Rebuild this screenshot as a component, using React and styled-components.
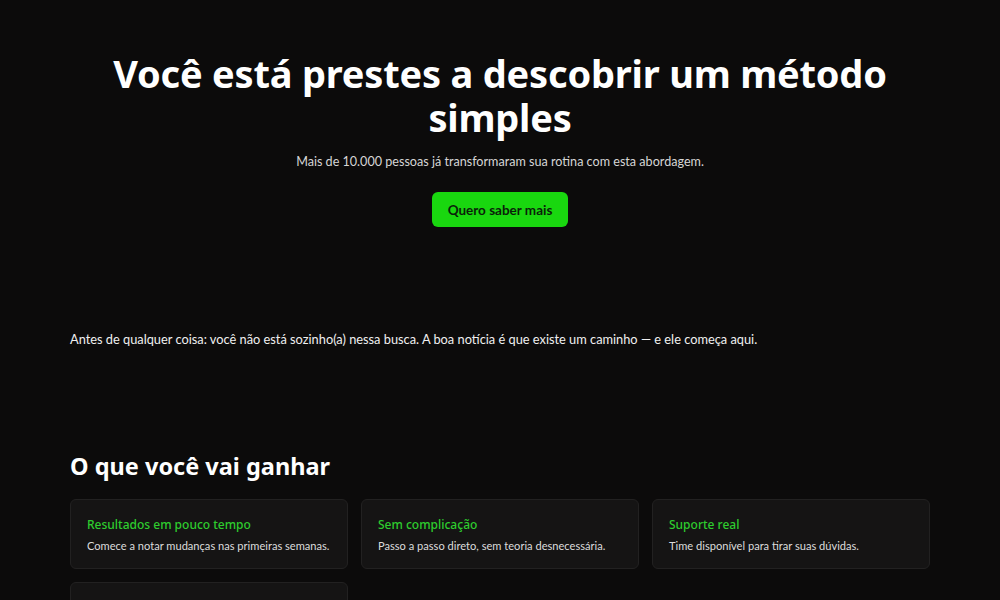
import React from 'react';
import styled, { createGlobalStyle } from 'styled-components';

const Global = createGlobalStyle`
    html, body {
        margin:0;
        padding:0;
        background:#0c0b0b;
        color:#f2f2f2;
        font-family:Lato, "Noto Sans", sans-serif;
    }
`

const Page = styled.main`
    width:860px;
    margin:0 auto;
`

const Hero = styled.section`
    display:flex;
    flex-direction:column;
    align-items:center;
    text-align:center;
    padding-top:51px;
`

const Title = styled.h1`
    margin:0;
    font-family:"Noto Sans", sans-serif;
    font-size:38px;
    line-height:44px;
    font-weight:700;
    letter-spacing:-0.2px;
    color:#fff;
    width:800px;
`

const Subtitle = styled.p`
    margin:14px 0 0;
    font-size:12.6px;
    line-height:18px;
    color:#d6d6d6;
`

const Button = styled.button`
    margin-top:21px;
    width:136px;
    height:35px;
    border:none;
    border-radius:6px;
    background:#19d70f;
    color:#0b1f0a;
    font-family:inherit;
    font-size:13.5px;
    font-weight:700;
    cursor:pointer;
`

const Intro = styled.p`
    margin:103px 0 0;
    font-size:12.8px;
    line-height:18px;
    color:#f0f0f0;
`

const Section = styled.section`
    margin-top:102px;
`

const SectionTitle = styled.h2`
    margin:0;
    font-family:"Noto Sans", sans-serif;
    font-size:23.5px;
    font-weight:700;
    color:#fff;
`

const Grid = styled.div`
    display:grid;
    grid-template-columns:repeat(3, minmax(0, 1fr));
    gap:13px;
    margin-top:17px;
`

const Card = styled.div`
    background:#151414;
    border:1px solid #222121;
    border-radius:6px;
    padding:16px 15px 16px 16px;
    height:70px;
    box-sizing:border-box;
`

const CardTitle = styled.h3`
    margin:0;
    font-family:"Noto Sans", sans-serif;
    font-size:12px;
    line-height:17px;
    font-weight:500;
    color:#2ecc2e;
`

const CardText = styled.p`
    margin:5px 0 0;
    font-size:11.1px;
    line-height:16px;
    color:#dcdcdc;
`

const benefits = [
    { title: "Resultados em pouco tempo", text: "Comece a notar mudanças nas primeiras semanas." },
    { title: "Sem complicação", text: "Passo a passo direto, sem teoria desnecessária." },
    { title: "Suporte real", text: "Time disponível para tirar suas dúvidas." },
    { title: "Acesso vitalício", text: "Estude no seu ritmo, quando quiser." },
]

const App = () => {
    return (
        <>
            <Global />
            <Page>
                <Hero>
                    <Title>Você está prestes a descobrir um método simples</Title>
                    <Subtitle>Mais de 10.000 pessoas já transformaram sua rotina com esta abordagem.</Subtitle>
                    <Button>Quero saber mais</Button>
                </Hero>

                <Intro>
                    Antes de qualquer coisa: você não está sozinho(a) nessa busca. A boa notícia é que existe um caminho — e ele começa aqui.
                </Intro>

                <Section>
                    <SectionTitle>O que você vai ganhar</SectionTitle>
                    <Grid>
                        {benefits.map((b) => (
                            <Card key={b.title}>
                                <CardTitle>{b.title}</CardTitle>
                                <CardText>{b.text}</CardText>
                            </Card>
                        ))}
                    </Grid>
                </Section>
            </Page>
        </>
    )
}

export default App;
